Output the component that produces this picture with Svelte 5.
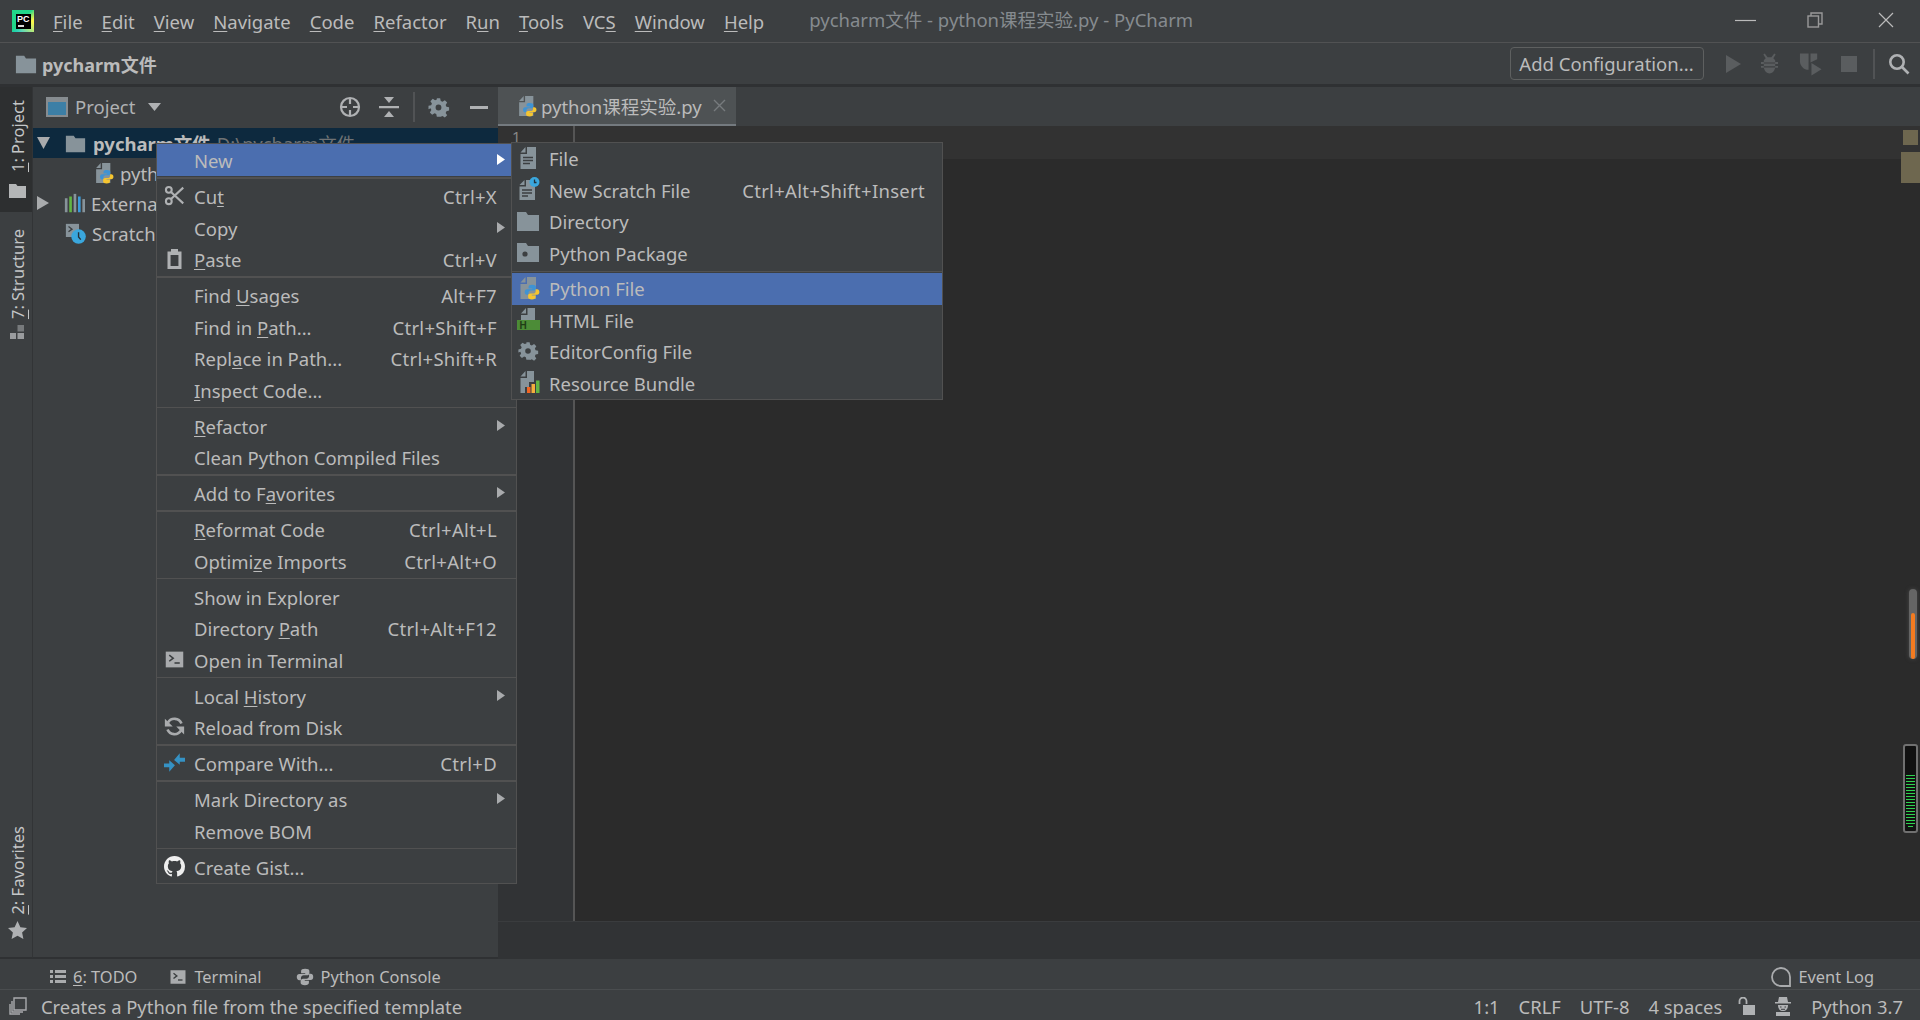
<script>
  const menus = ['_File', '_Edit', '_View', '_Navigate', '_Code', '_Refactor', 'R_un', '_Tools', 'VC_S', '_Window', '_Help']

  // "_" marks the mnemonic letter, a "sep" entry is a divider
  const mainMenu = [
    { label: 'New', arrow: true, active: true },
    { sep: true, thick: true },
    { label: 'Cu_t', key: 'Ctrl+X', icon: 'cut' },
    { label: 'Copy', arrow: true },
    { label: '_Paste', key: 'Ctrl+V', icon: 'paste' },
    { sep: true, thick: true },
    { label: 'Find _Usages', key: 'Alt+F7' },
    { label: 'Find in _Path...', key: 'Ctrl+Shift+F' },
    { label: 'Repl_ace in Path...', key: 'Ctrl+Shift+R' },
    { label: '_Inspect Code...' },
    { sep: true },
    { label: '_Refactor', arrow: true },
    { label: 'Clean Python Compiled Files' },
    { sep: true, thick: true },
    { label: 'Add to F_avorites', arrow: true },
    { sep: true, thick: true },
    { label: '_Reformat Code', key: 'Ctrl+Alt+L' },
    { label: 'Optimi_ze Imports', key: 'Ctrl+Alt+O' },
    { sep: true },
    { label: 'Show in Explorer' },
    { label: 'Directory _Path', key: 'Ctrl+Alt+F12' },
    { label: 'Open in Terminal', icon: 'terminal' },
    { sep: true },
    { label: 'Local _History', arrow: true },
    { label: 'Reload from Disk', icon: 'reload' },
    { sep: true, thick: true },
    { label: 'Compare With...', key: 'Ctrl+D', icon: 'compare' },
    { sep: true, thick: true },
    { label: 'Mark Directory as', arrow: true },
    { label: 'Remove BOM' },
    { sep: true },
    { label: 'Create Gist...', icon: 'github' }
  ]

  const subMenu = [
    { label: 'File', icon: 'file' },
    { label: 'New Scratch File', key: 'Ctrl+Alt+Shift+Insert', icon: 'scratchfile' },
    { label: 'Directory', icon: 'folder' },
    { label: 'Python Package', icon: 'package' },
    { sep: true },
    { label: 'Python File', icon: 'pyfile', active: true },
    { label: 'HTML File', icon: 'html' },
    { label: 'EditorConfig File', icon: 'gear' },
    { label: 'Resource Bundle', icon: 'bundle' }
  ]

  const parts = (s) => {
    const i = s.indexOf('_')
    if (i < 0) return [s, '', '']
    return [s.slice(0, i), s[i + 1], s.slice(i + 2)]
  }

  const memBars = Array.from({ length: 18 })
</script>

{#snippet mn(text)}
  {@const p = parts(text)}
  {p[0]}<u>{p[1]}</u>{p[2]}
{/snippet}

{#snippet ic(name, cls = 'i24')}
  <svg class={cls} viewBox="0 0 24 24"><use href={'#' + name} /></svg>
{/snippet}

<svg class="defs" width="0" height="0">
  <defs>
    <path id="pyhalf" d="M11.6 1C8.300 1 6.500 2 6.500 4v2.600h5.300v1H4.300C2.200 7.600 1 9.200 1 11.500c0 2.400 1.200 4 3.300 4h2v-2.700c0-2 1.600-3.500 3.500-3.500h4.300c1.700 0 3-1.300 3-3V4c0-1.900-1.900-3-5.500-3z" />
    <g id="py">
      <use href="#pyhalf" fill="#3f93d4" />
      <use href="#pyhalf" fill="#f5c530" transform="rotate(180 11.500 11.500)" />
    </g>
    <g id="page">
      <path d="M9.500 1v5.500H4.500z" fill="#87939a" />
      <path d="M11 1h9v22H4.500V8H11z" fill="#87939a" />
    </g>
    <symbol id="file" viewBox="0 0 24 24">
      <use href="#page" />
      <path d="M7 11.500h10M7 14.500h10M7 17.500h7" stroke="#3c3f41" stroke-width="1.400" />
    </symbol>
    <symbol id="scratchfile" viewBox="0 0 24 24">
      <path d="M8.500 3v5H3.500z" fill="#87939a" />
      <path d="M10 3h7v5l2 2v13H3.500V9.500H10z" fill="#87939a" />
      <path d="M6 13h10M6 16h10M6 19h6" stroke="#3c3f41" stroke-width="1.400" />
      <circle cx="18.500" cy="5" r="5" fill="#3aa7dd" />
      <path d="M18.500 2.500V5.500h2" stroke="#23323c" stroke-width="1.300" fill="none" />
    </symbol>
    <symbol id="folder" viewBox="0 0 24 24">
      <path d="M1 3h9l2 3h11v16H1z" fill="#87939a" />
    </symbol>
    <symbol id="package" viewBox="0 0 24 24">
      <path d="M1 3h9l2 3h11v16H1z" fill="#87939a" />
      <circle cx="9" cy="14" r="2.600" fill="#3c3f41" />
    </symbol>
    <symbol id="pyfile" viewBox="0 0 24 24">
      <use href="#page" />
      <use href="#py" transform="translate(8 8) scale(.7)" />
    </symbol>
    <symbol id="html" viewBox="0 0 24 24">
      <path d="M10 1v5.500H5z" fill="#87939a" />
      <path d="M11.500 1H19v12H5V8h6.500z" fill="#87939a" />
      <path d="M1 13h23v10H1z" fill="#4c8c37" />
      <text x="3.500" y="22" class="htmlh">H</text>
    </symbol>
    <symbol id="gear" viewBox="-3 -3 30 30">
      <path fill-rule="evenodd" d="M10 1h4l.7 3.200 2.100.9L19.600 3.300l2.800 2.800-1.800 2.800.9 2.100 3.200.7v4l-3.200.7-.9 2.100 1.800 2.800-2.800 2.800-2.800-1.800-2.100.9L14 23h-4l-.7-3.200-2.100-.9-2.800 1.800-2.800-2.800 1.800-2.800-.9-2.100L0 14v-4l3.200-.7.9-2.100-1.800-2.800 2.800-2.800 2.800 1.800 2.100-.9zM12 8.500a3.500 3.500 0 1 0 0 7 3.500 3.500 0 0 0 0-7z" fill="#87939a" />
    </symbol>
    <symbol id="bundle" viewBox="0 0 24 24">
      <path d="M9.500 1v5.500H4.500z" fill="#87939a" />
      <path d="M11 1h7v11h-5v5H9v6H4.500V8H11z" fill="#87939a" />
      <rect x="11" y="17" width="3.500" height="6" fill="#f26522" />
      <rect x="15.500" y="14" width="3.500" height="9" fill="#f4af3d" />
      <rect x="20" y="10.500" width="3.500" height="12.500" fill="#62b543" />
    </symbol>
    <symbol id="cut" viewBox="0 0 24 24">
      <g fill="none" stroke="#afb1b3" stroke-width="2.400">
        <circle cx="5.500" cy="18.500" r="3.300" />
        <circle cx="5.500" cy="5.500" r="3.300" />
        <path d="M8 8l14 13M8 16L22 3" />
      </g>
    </symbol>
    <symbol id="paste" viewBox="0 0 24 24">
      <path fill-rule="evenodd" d="M8 1h8v3h4v20H4V4h4zM7.500 8v12.500h9V8z" fill="#afb1b3" />
    </symbol>
    <symbol id="terminal" viewBox="0 0 24 24">
      <path d="M2 3h20v18H2z" fill="#a9abad" />
      <path d="M6 7l4.500 3.500L6 14" stroke="#3c3f41" stroke-width="1.800" fill="none" />
      <path d="M12 16h6" stroke="#3c3f41" stroke-width="1.800" />
    </symbol>
    <symbol id="reload" viewBox="0 0 24 24">
      <g fill="none" stroke="#a9abad" stroke-width="3">
        <path d="M20 8.500A8.700 8.700 0 0 0 4.500 7.500" />
        <path d="M4 15.500A8.700 8.700 0 0 0 19.500 16.500" />
      </g>
      <path d="M1 3v9h9zM23 21v-9h-9z" fill="#a9abad" />
    </symbol>
    <symbol id="compare" viewBox="0 0 24 24">
      <path d="M11.500 9L18 1.500V6.500h6v4.500h-6v3.500zM12.500 15L6 22.500V17.500H0V13h6V9.500z" fill="#3592c4" />
    </symbol>
    <symbol id="github" viewBox="0 0 16 16">
      <path d="M8 0C3.580 0 0 3.580 0 8c0 3.540 2.290 6.530 5.470 7.590.4.070.55-.17.55-.38 0-.19-.01-.82-.01-1.490-2.010.37-2.530-.49-2.690-.94-.09-.23-.48-.94-.82-1.130-.28-.15-.68-.52-.01-.53.630-.01 1.080.58 1.230.82.720 1.210 1.870.87 2.330.66.070-.52.280-.87.510-1.070-1.780-.2-3.640-.89-3.640-3.950 0-.87.310-1.590.820-2.150-.080-.2-.36-1.020.080-2.120 0 0 .670-.21 2.200.82.640-.18 1.320-.27 2-.27s1.360.09 2 .27c1.530-1.040 2.200-.82 2.200-.82.440 1.100.160 1.920.080 2.120.510.560.820 1.270.820 2.150 0 3.070-1.870 3.750-3.650 3.950.290.25.540.73.540 1.480 0 1.070-.01 1.930-.01 2.200 0 .210.150.460.550.380A8.010 8.010 0 0 0 16 8c0-4.420-3.580-8-8-8z" fill="#eeeeee" />
    </symbol>
    <symbol id="scratch" viewBox="0 0 24 24">
      <path d="M1 1h15v15H1z" fill="#87939a" />
      <path d="M4 4l4 3-4 3" stroke="#3c3f41" stroke-width="1.500" fill="none" />
      <circle cx="15.500" cy="15.500" r="8.300" fill="#3aa7dd" />
      <path d="M15.500 10.500v5.500l2.500 3" stroke="#23323c" stroke-width="1.600" fill="none" />
    </symbol>
    <symbol id="library" viewBox="0 0 24 24">
      <rect x="1" y="6" width="3" height="16" fill="#87939a" />
      <rect x="6" y="4" width="3" height="18" fill="#62b543" />
      <rect x="11" y="1" width="3" height="21" fill="#87939a" />
      <rect x="16" y="4" width="3" height="18" fill="#3a9bd9" />
      <rect x="21" y="7" width="3" height="15" fill="#87939a" />
    </symbol>
  </defs>
</svg>

<div class="ide">
  <header class="titlebar">
    <div class="logo"><span>PC</span><i></i></div>
    <nav class="menubar">
      {#each menus as m}
        <span>{@render mn(m)}</span>
      {/each}
    </nav>
    <span class="wintitle">pycharm文件 - python课程实验.py - PyCharm</span>
    <div class="winbtns">
      <svg width="22" height="16" viewBox="0 0 22 16"><path d="M0 8.500h21" stroke="#bbb" stroke-width="1.200" /></svg>
      <svg width="16" height="16" viewBox="0 0 16 16" fill="none" stroke="#999" stroke-width="1.400"><rect x="1" y="4" width="10.500" height="11" /><path d="M4 4V1h11v11h-3.500" /></svg>
      <svg width="16" height="16" viewBox="0 0 16 16"><path d="M1 1l14 14M15 1L1 15" stroke="#bbb" stroke-width="1.200" /></svg>
    </div>
  </header>

  <div class="navbar">
    {@render ic('folder', 'navfolder')}
    <b>pycharm文件</b>
    <button class="addcfg">Add Configuration...</button>
    <div class="runbtns">
      <svg width="15" height="18" viewBox="0 0 15 18"><path d="M0 0l15 9-15 9z" /></svg>
      <svg width="19" height="22" viewBox="0 0 20 22"><path d="M5 0l3 4h4l3-4 1.500 1L14 5l2 2v2h3v2h-3v2h3v2h-3c-1 4-3 6-6 6s-5-2-6-6H1v-2h3v-2H1V9h3V7l2-2L3.500 1z" /><path d="M4 10h12M4 14h12" stroke="#3c3f41" stroke-width="1.200" /></svg>
      <svg width="23" height="24" viewBox="0 0 24 24"><path d="M1 1h9v17C5 18 1 14 1 9z" /><path d="M12 1h7v6l-7 3.500z" /><path d="M13 11l10.500 6.500L13 24z" /></svg>
      <svg width="16" height="16" viewBox="0 0 16 16"><path d="M0 0h16v16H0z" /></svg>
    </div>
    <span class="vsep"></span>
    <svg class="search" width="22" height="22" viewBox="0 0 22 22" fill="none" stroke="#afb1b3" stroke-width="2.600"><circle cx="9" cy="9" r="6.700" /><path d="M13.500 13.500l7 7" /></svg>
  </div>

  <div class="main">
    <aside class="sidebar">
      <div class="stripe active">
        <span class="vtext"><u>1</u>: Project</span>
        <svg width="17" height="14" viewBox="0 0 17 14"><path d="M0 0h7l1.500 2H17v12H0z" fill="#b4b6b7" /></svg>
      </div>
      <div class="stripe">
        <span class="vtext"><u>7</u>: Structure</span>
        <svg width="14" height="14" viewBox="0 0 14 14"><path d="M0 8h6v6H0z M7.500 8h6.500v6H7.500z" fill="#9a9c9e" /><path d="M7.500 0h6.500v6.500H7.500z" fill="#777a7c" /></svg>
      </div>
      <div class="stripe fav">
        <span class="vtext"><u>2</u>: Favorites</span>
        <svg width="19" height="18" viewBox="0 0 19 18"><path d="M9.500 0l2.900 6.200 6.600.8-4.900 4.500 1.300 6.500-5.900-3.300L3.600 18l1.300-6.500L0 7l6.600-.8z" fill="#afb1b3" /></svg>
      </div>
    </aside>

    <section class="project">
      <div class="pheader">
        <svg width="22" height="20" viewBox="0 0 22 20"><path d="M0 0h22v20H0z" fill="#868c90" /><path d="M2 5h18v13H2z" fill="#3c7fa6" /></svg>
        <span class="ptitle">Project</span>
        <svg width="13" height="8" viewBox="0 0 13 8"><path d="M0 0h13L6.500 8z" fill="#afb1b3" /></svg>
        <div class="ptools">
          <svg class="target" width="22" height="22" viewBox="0 0 22 22" fill="none" stroke="#afb1b3" stroke-width="2.200"><circle cx="11" cy="11" r="9" /><path d="M11 2v6M11 14v6M2 11h6M14 11h6" /></svg>
          <svg width="20" height="22" viewBox="0 0 20 22" fill="#afb1b3"><path d="M0 10h20v2.200H0zM5 1h10l-5 6zM5 21h10l-5-6z" /></svg>
          <span class="vsep"></span>
          <svg class="pgear" width="25" height="25" viewBox="0 0 24 24"><use href="#gear" /></svg>
          <svg width="18" height="3" viewBox="0 0 18 3"><path d="M0 0h18v3H0z" fill="#afb1b3" /></svg>
        </div>
      </div>
      <div class="tree">
        <div class="row sel">
          <svg class="tri" width="13" height="12" viewBox="0 0 13 12"><path d="M0 0h13L6.500 12z" /></svg>
          {@render ic('folder', 'i21')}
          <b>pycharm文件</b><span class="dim">D:\pycharm文件</span>
        </div>
        <div class="row lvl2">
          {@render ic('pyfile', 'i22')}
          <span>python课程实验.py</span>
        </div>
        <div class="row">
          <svg class="tri" width="12" height="14" viewBox="0 0 12 14"><path d="M0 0l12 7-12 7z" /></svg>
          {@render ic('library', 'i21')}
          <span>External Libraries</span>
        </div>
        <div class="row noarrow">
          {@render ic('scratch', 'i21')}
          <span>Scratches and Consoles</span>
        </div>
      </div>
    </section>

    <section class="editor">
      <div class="tabs">
        <div class="tab">
          {@render ic('pyfile', 'i22')}
          <span>python课程实验.py</span>
          <svg width="13" height="13" viewBox="0 0 13 13"><path d="M1 1l11 11M12 1L1 12" stroke="#777b7e" stroke-width="1.400" /></svg>
        </div>
      </div>
      <div class="code">
        <div class="gutter"><div class="curline"><span>1</span></div></div>
        <div class="content"><div class="curline"></div></div>
        <i class="mark m1"></i>
        <i class="mark m2"></i>
        <div class="scrollbar"><i></i></div>
        <div class="membar">
          {#each memBars as _}<i></i>{/each}
        </div>
      </div>
      <div class="crumbs"></div>
    </section>
  </div>

  <div class="toolbar">
    <div class="tw first">
      <svg width="16" height="13" viewBox="0 0 16 13" fill="#a9abad"><path d="M0 0h3v3H0zM5 0h11v3H5zM0 5h3v3H0zM5 5h11v3H5zM0 10h3v3H0zM5 10h11v3H5z" /></svg>
      <span><u>6</u>: TODO</span>
    </div>
    <div class="tw">
      <svg class="i18" viewBox="0 0 24 24"><use href="#terminal" /></svg>
      <span>Terminal</span>
    </div>
    <div class="tw pycon">
      <svg class="i18" viewBox="0 0 23 23"><use href="#pyhalf" fill="#a9abad" /><use href="#pyhalf" fill="#a9abad" transform="rotate(180 11.500 11.500)" /></svg>
      <span>Python Console</span>
    </div>
    <div class="tw eventlog">
      <svg width="20" height="20" viewBox="0 0 20 20" fill="none" stroke="#a9abad" stroke-width="1.800"><path d="M19 19H10a9 9 0 1 1 9-9z" /></svg>
      <span>Event Log</span>
    </div>
  </div>

  <footer class="status">
    <svg width="18" height="18" viewBox="0 0 18 18" fill="none" stroke="#a9abad" stroke-width="1.400"><path d="M5 1h12v12H5z" /><path d="M3 4v11h11M1 7v10h10" /></svg>
    <span class="hint">Creates a Python file from the specified template</span>
    <div class="sright">
      <span>1:1</span>
      <span>CRLF</span>
      <span>UTF-8</span>
      <span>4 spaces</span>
      <svg class="lock" width="17" height="18" viewBox="0 0 17 18" fill="none"><path d="M1.500 7V4a3.500 3.500 0 0 1 7 0v3" stroke="#afb1b3" stroke-width="1.800" /><path d="M5 8h12v10H5z" fill="#afb1b3" /></svg>
      <svg width="18" height="19" viewBox="0 0 18 19" fill="#afb1b3"><path d="M5 0h8l1 5h3v1.500H1V5h3zM4 8h10c0 4-2 6-5 6s-5-2-5-6zM2 15h14v4H2z" /><path d="M6 10h1.500M10.500 10h1.500M7 12.300h4" stroke="#3c3f41" stroke-width="1" /></svg>
      <span class="py">Python 3.7</span>
    </div>
  </footer>

  <div class="ctx main-menu">
    {#each mainMenu as it}
      {#if it.sep}
        <div class="sep" class:thick={it.thick}></div>
      {:else}
        <div class="item" class:active={it.active}>
          <span class="icon">{#if it.icon}{@render ic(it.icon, 'i21')}{/if}</span>
          <span class="label">{@render mn(it.label)}</span>
          {#if it.key}<span class="key">{it.key}</span>{/if}
          {#if it.arrow}<svg class="arrow" width="8" height="11" viewBox="0 0 8 11"><path d="M0 0l8 5.500L0 11z" /></svg>{/if}
        </div>
      {/if}
    {/each}
  </div>

  <div class="ctx sub-menu">
    {#each subMenu as it}
      {#if it.sep}
        <div class="sep"></div>
      {:else}
        <div class="item" class:active={it.active}>
          <span class="icon">{@render ic(it.icon, 'i24')}</span>
          <span class="label">{it.label}</span>
          {#if it.key}<span class="key">{it.key}</span>{/if}
        </div>
      {/if}
    {/each}
  </div>
</div>

<style>
  :global(body) {
    margin: 0;
    background: #3c3f41;
  }

  .defs {
    position: absolute;
  }

  .htmlh {
    font: bold 10px "Liberation Sans", sans-serif;
    fill: #1f3d16;
  }

  .ide {
    position: relative;
    display: flex;
    flex-direction: column;
    width: 1920px;
    height: 1020px;
    overflow: hidden;
    background: #3c3f41;
    color: #bbbbbb;
    font-family: "Noto Sans", "Noto Sans CJK SC", sans-serif;
    font-size: 18.500px;
  }

  svg {
    flex: none;
    display: block;
  }

  .i18 { width: 18px; height: 18px; }
  .i21 { width: 21px; height: 21px; }
  .i22 { width: 22px; height: 22px; }
  .i24 { width: 24px; height: 24px; }

  u {
    text-underline-offset: 2px;
  }

  .titlebar {
    display: flex;
    align-items: center;
    height: 42px;
    flex: none;
    border-bottom: 1px solid #515253;
  }

  .logo {
    position: relative;
    width: 22px;
    height: 22px;
    margin-left: 12px;
    margin-top: -1px;
    padding: 4px 3px 3px 4px;
    box-sizing: border-box;
    background:
      linear-gradient(135deg, #21d789 0%, #21d789 45%, transparent 70%),
      linear-gradient(45deg, #07c3f2 0%, #fcf84a 70%);
  }

  .logo span {
    display: block;
    width: 15px;
    height: 15px;
    background: #000;
    color: #fff;
    font: bold 9px/10px "Liberation Sans", sans-serif;
    padding-left: 1px;
    box-sizing: border-box;
  }

  .logo i {
    position: absolute;
    left: 6px;
    bottom: 5px;
    width: 6px;
    height: 1.500px;
    background: #d8d8d8;
  }

  .menubar {
    display: flex;
    gap: 19px;
    margin-left: 19px;
    color: #bbbbbb;
  }

  .wintitle {
    margin-left: 45px;
    color: #868b8f;
    transform: translateY(-2px);
  }

  .winbtns {
    display: flex;
    align-items: center;
    gap: 50px;
    margin-left: auto;
    margin-right: 26px;
    transform: translateY(-1px);
  }

  .winbtns svg:nth-child(2) {
    margin-right: 5px;
  }

  .navbar {
    display: flex;
    align-items: center;
    height: 41px;
    flex: none;
    border-bottom: 3px solid #2f3133;
  }

  .navfolder {
    width: 22px;
    height: 22px;
    margin-left: 15px;
  }

  .navbar b {
    margin-left: 5px;
    font-size: 18px;
  }

  .addcfg {
    margin-left: auto;
    width: 194px;
    height: 33px;
    padding: 2px 0 0;
    border: 1.500px solid #5e6060;
    border-radius: 4px;
    background: none;
    color: #bbbbbb;
    font: inherit;
    line-height: 1;
  }

  .runbtns {
    display: flex;
    align-items: center;
    gap: 19.500px;
    margin-left: 22px;
    fill: #5a5d5f;
  }

  .vsep {
    width: 2px;
    height: 30px;
    background: #515355;
  }

  .navbar .vsep {
    margin-left: 16px;
  }

  .search {
    margin-left: 13px;
    margin-right: 10px;
  }

  .main {
    display: flex;
    flex: 1;
    min-height: 0;
  }

  .sidebar {
    display: flex;
    flex-direction: column;
    width: 32px;
    flex: none;
    border-right: 1px solid #323436;
    border-bottom: 2px solid #2f3133;
  }

  .stripe {
    display: flex;
    flex-direction: column;
    align-items: center;
    gap: 6px;
    padding-top: 14px;
    padding-left: 2px;
    font-size: 16.500px;
  }

  .stripe.active {
    height: 125px;
    box-sizing: border-box;
    background: #2d2f30;
    padding-top: 13px;
    gap: 12px;
  }

  .stripe.fav {
    margin-top: auto;
    padding-bottom: 18px;
  }

  .stripe:nth-child(2) {
    padding-top: 17px;
  }

  .vtext {
    writing-mode: vertical-rl;
    transform: rotate(180deg);
    white-space: nowrap;
    color: #c4c6c7;
  }

  .project {
    width: 465px;
    flex: none;
    border-bottom: 2px solid #2f3133;
  }

  .pheader {
    display: flex;
    align-items: center;
    height: 40px;
    padding-left: 13px;
  }

  .ptitle {
    margin: 0 13px 2px 7px;
    color: #afb1b3;
  }

  .ptools {
    display: flex;
    align-items: center;
    margin-left: auto;
    margin-right: 10px;
    gap: 15px;
  }

  .ptools .target {
    margin-right: 3px;
  }

  .ptools .vsep {
    margin-left: -1px;
  }

  .ptools .pgear {
    margin-left: -4px;
    margin-right: 4px;
  }

  .tree {
    margin-top: 1px;
  }

  .row {
    display: flex;
    align-items: center;
    height: 30px;
    padding-left: 4px;
    white-space: nowrap;
    overflow: hidden;
  }

  .row b {
    margin-left: 7px;
  }

  .row span {
    margin-left: 6px;
  }

  .row .dim {
    margin-left: 6px;
    color: #6f7274;
  }

  .row.sel {
    background: #0d293e;
  }

  .row.lvl2 {
    padding-left: 59px;
  }

  .row.noarrow {
    padding-left: 32px;
  }

  .tri {
    fill: #a9abad;
    margin-right: 15px;
  }

  .editor {
    display: flex;
    flex-direction: column;
    flex: 1;
    min-width: 0;
  }

  .tabs {
    display: flex;
    height: 39px;
    flex: none;
  }

  .tab {
    display: flex;
    align-items: center;
    width: 238px;
    height: 41px;
    box-sizing: border-box;
    background: #4e5254;
    border-bottom: 4px solid #747a7f;
    padding-left: 17px;
    position: relative;
  }

  .tab span {
    margin: 0 11px 0 4px;
    white-space: nowrap;
  }

  .code {
    position: relative;
    display: flex;
    flex: 1;
    min-height: 0;
    background: #2b2b2b;
  }

  .gutter {
    width: 75px;
    flex: none;
    background: #313335;
    border-right: 2px solid #555555;
  }

  .content {
    flex: 1;
  }

  .curline {
    height: 33px;
    background: #323232;
    color: #888;
    font-size: 15px;
  }

  .gutter .curline span {
    margin-left: 14px;
  }

  .mark {
    position: absolute;
    background: #6e674f;
  }

  .m1 {
    right: 2px;
    top: 4px;
    width: 15px;
    height: 15px;
  }

  .m2 {
    right: 0;
    top: 26px;
    width: 19px;
    height: 31px;
  }

  .scrollbar {
    position: absolute;
    right: 3px;
    top: 463px;
    width: 8px;
    height: 70px;
    border-radius: 4px;
    background: #656565;
    box-shadow: 0 0 4px #4a4a4a;
  }

  .scrollbar i {
    position: absolute;
    left: 2px;
    right: 2px;
    bottom: 0;
    height: 46px;
    border-radius: 2px;
    background: #f47b20;
  }

  .membar {
    position: absolute;
    right: 2px;
    top: 618px;
    width: 15px;
    height: 89px;
    box-sizing: border-box;
    display: flex;
    flex-direction: column;
    justify-content: flex-end;
    gap: 2px;
    padding: 0 1px 4px;
    background: #111;
    border: 2px solid #707070;
    border-radius: 3px;
  }

  .membar i {
    height: 1px;
    flex: none;
    background: #2ed34f;
  }

  .membar i:last-child {
    margin: 0 2px;
  }

  .crumbs {
    height: 37px;
    flex: none;
    background: #313335;
    border-top: 1px solid #3a3c3e;
  }

  .toolbar {
    display: flex;
    align-items: center;
    height: 30px;
    box-sizing: border-box;
    padding-top: 5px;
    flex: none;
    font-size: 16.400px;
  }

  .tw {
    display: flex;
    align-items: center;
    gap: 7px;
    margin-left: 32px;
  }

  .tw.first {
    margin-left: 50px;
  }

  .tw.pycon {
    margin-left: 34px;
  }

  .tw.eventlog {
    margin-left: auto;
    margin-right: 46px;
  }

  .status {
    display: flex;
    align-items: center;
    height: 31px;
    box-sizing: border-box;
    padding: 2px 0 0 9px;
    flex: none;
    border-top: 1px solid #4a4d4f;
    font-size: 18.400px;
  }

  .hint {
    margin-left: 14px;
  }

  .sright {
    display: flex;
    align-items: center;
    gap: 19px;
    margin-left: auto;
    margin-right: 17px;
  }

  .lock {
    margin-left: -3px;
  }

  .ctx {
    position: absolute;
    box-sizing: border-box;
    background: #3c3f41;
    border: 1px solid #515151;
    white-space: nowrap;
  }

  .main-menu {
    left: 156px;
    top: 143px;
    width: 361px;
    height: 741px;
    z-index: 1;
  }

  .sub-menu {
    left: 511px;
    top: 142px;
    width: 432px;
    z-index: 2;
  }

  .item {
    position: relative;
    display: flex;
    align-items: center;
    height: 31.500px;
  }

  .item.active {
    background: #4b6eaf;
  }

  .icon {
    display: flex;
    justify-content: center;
    width: 34px;
    margin-right: 3px;
    flex: none;
  }

  .label {
    padding-top: 2px;
  }

  .sub-menu .icon {
    width: 32px;
    margin: -2px 5px 0 0;
  }

  .sub-menu .label {
    padding-top: 0;
  }

  .key {
    position: absolute;
    right: 19px;
    padding-top: 2px;
    color: #bbbbbb;
    letter-spacing: 0.300px;
  }

  .sub-menu .key {
    right: 17px;
    padding-top: 0;
  }

  .arrow {
    position: absolute;
    right: 11px;
    fill: #a9abad;
  }

  .item.active .arrow {
    fill: #ffffff;
  }

  .sep {
    height: 4.500px;
    display: flex;
    align-items: center;
  }

  .sep::before {
    content: "";
    flex: 1;
    height: 1px;
    background: #515151;
  }

  .sep.thick::before {
    height: 2px;
  }

  .sub-menu .sep {
    height: 4px;
  }
</style>
